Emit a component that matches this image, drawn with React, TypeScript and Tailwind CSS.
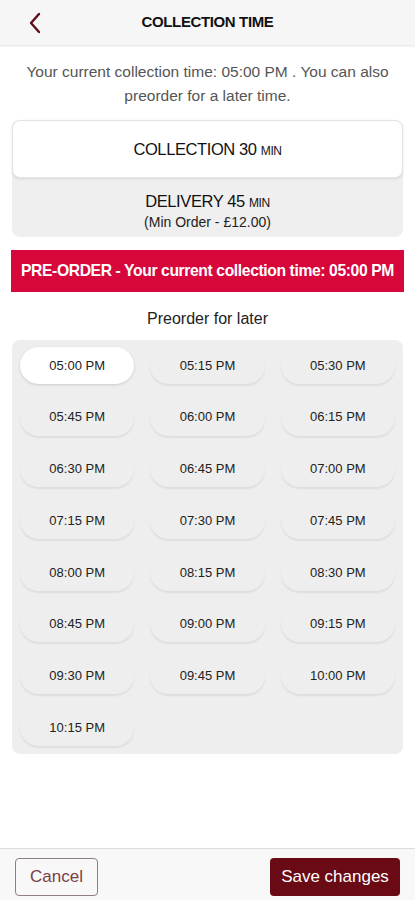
import React, { useState } from 'react';

const TIMES = [
    '05:00 PM', '05:15 PM', '05:30 PM',
    '05:45 PM', '06:00 PM', '06:15 PM',
    '06:30 PM', '06:45 PM', '07:00 PM',
    '07:15 PM', '07:30 PM', '07:45 PM',
    '08:00 PM', '08:15 PM', '08:30 PM',
    '08:45 PM', '09:00 PM', '09:15 PM',
    '09:30 PM', '09:45 PM', '10:00 PM',
    '10:15 PM',
];

const ChevronLeft = () => (
    <svg width="14" height="22" viewBox="0 0 14 22" fill="none">
        <path d="M11 2L3 11l8 9" stroke="#5c0f18" strokeWidth="2.4" strokeLinecap="round" strokeLinejoin="round" />
    </svg>
);

const App: React.FC = () => {
    const [selected, setSelected] = useState('05:00 PM');

    return (
        <div className="flex h-[900px] flex-col bg-white font-['Liberation_Sans',sans-serif] text-[#1a1a1a]">
            {/* header */}
            <div className="relative flex h-[45px] shrink-0 items-center justify-center bg-[#f6f6f6] shadow-[0_1px_2px_rgba(0,0,0,0.12)]">
                <button className="absolute left-[28px] top-[12px]">
                    <ChevronLeft />
                </button>
                <h1 className="text-[15px] font-bold tracking-tight text-[#111]">COLLECTION TIME</h1>
            </div>

            <div className="flex-1 px-3">
                <p className="mx-auto mt-[15px] max-w-[390px] text-center text-[15.5px] leading-[24px] text-[#555]">
                    Your current collection time: 05:00 PM . You can also preorder for a later time.
                </p>

                {/* service tabs */}
                <div className="mt-[12px] rounded-lg bg-[#efefef]">
                    <div className="flex h-[58px] items-center justify-center rounded-lg border border-[#e4e4e4] bg-white shadow-[0_1px_3px_rgba(0,0,0,0.1)]">
                        <span className="text-[16.5px] tracking-[-0.4px] text-[#111]">
                            COLLECTION 30 <span className="text-[12px]">MIN</span>
                        </span>
                    </div>
                    <div className="flex h-[59px] flex-col items-center justify-center pt-[6px]">
                        <span className="text-[16.5px] leading-[22px] tracking-[-0.4px] text-[#111]">
                            DELIVERY 45 <span className="text-[12px]">MIN</span>
                        </span>
                        <span className="text-[14px] leading-[17px] text-[#222]">(Min Order - £12.00)</span>
                    </div>
                </div>

                <div className="mx-[-1px] mt-[13px] flex h-[42px] items-center justify-center bg-[#d7063b]">
                    <span className="text-[15.7px] font-bold tracking-tight text-white">
                        PRE-ORDER - Your current collection time: 05:00 PM
                    </span>
                </div>

                <p className="mt-[15px] text-center text-[16px] leading-[24px] text-[#222]">Preorder for later</p>

                {/* time slots */}
                <div className="mt-[9px] grid grid-cols-3 gap-x-4 gap-y-[14.7px] rounded-lg bg-[#eeeeee] px-2 pb-[8px] pt-[7px]">
                    {TIMES.map((t) => {
                        const active = t === selected;
                        return (
                            <button
                                key={t}
                                onClick={() => setSelected(t)}
                                className={
                                    active
                                        ? 'h-[37px] rounded-full bg-white text-[13px] text-[#222] shadow-[0_1px_3px_rgba(0,0,0,0.15)]'
                                        : 'h-[37px] rounded-full bg-[#eeeeee] text-[13px] text-[#222] shadow-[0_2px_2px_rgba(0,0,0,0.07)]'
                                }
                            >
                                {t}
                            </button>
                        );
                    })}
                </div>
            </div>

            {/* footer */}
            <div className="flex h-[52px] shrink-0 items-start justify-between border-t border-[#dcdcdc] bg-[#f8f8f8] px-[15px] pt-[9px]">
                <button className="h-[38px] w-[83px] rounded border border-[#8f8080] text-[17px] text-[#7a4048]">
                    Cancel
                </button>
                <button className="h-[38px] w-[130px] rounded bg-[#6a0a14] text-[17px] text-white">
                    Save changes
                </button>
            </div>
        </div>
    );
};

export default App;
